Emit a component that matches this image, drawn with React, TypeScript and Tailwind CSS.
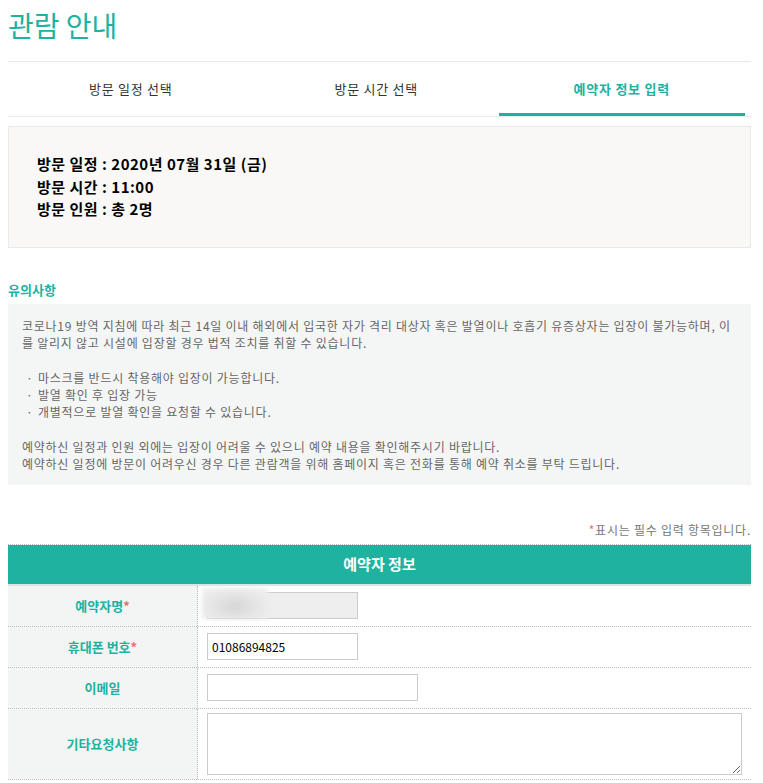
import React from "react";

const font = { fontFamily: '"Noto Sans CJK KR", "Noto Sans", sans-serif' };

const tabs = ["방문 일정 선택", "방문 시간 선택", "예약자 정보 입력"];

function Row({ label, required, tall, children }: { label: string; required?: boolean; tall?: boolean; children: React.ReactNode }) {
  return (
    <div className={`flex border-b border-dotted border-[#bbbbbb] ${tall ? "h-[71px]" : "h-[41px]"}`}>
      <div className="flex w-[190px] shrink-0 items-center justify-center border-r border-dotted border-[#bbbbbb] bg-[#f3f5f4] text-[13px] font-bold text-[#20b2a0]">
        {label}
        {required && <span className="text-[#f26a6a]">*</span>}
      </div>
      <div className="relative flex flex-1 items-center pl-[9px]">{children}</div>
    </div>
  );
}

export default function App() {
  return (
    <div className="min-h-screen bg-white" style={font}>
      <div className="ml-2 w-[743px]">
        <h1 className="pt-[5px] text-[28px] leading-[40px] font-normal text-[#20b2a0]">관람 안내</h1>
        <div className="mt-[16px] grid grid-cols-[repeat(3,245.5px)] border-y border-[#e6eaea]">
          {tabs.map((t, i) => (
            <div key={t} className="relative flex h-[54px] items-center justify-center text-[13px] tracking-[0.75px]">
              <span className={i === 2 ? "font-bold text-[#20b2a0]" : "text-[#333333]"}>{t}</span>
              {i === 2 && <div className="absolute bottom-0 left-0 h-[3px] w-full bg-[#20b2a0]" />}
            </div>
          ))}
        </div>

        <div className="mt-[9px] border border-[#e8eaea] bg-[#f9f8f6] pt-[26px] pb-[26px] pl-[28px] text-[15px] leading-[22.5px] font-bold tracking-[0.5px] text-black">
          <p>방문 일정 : 2020년 07월 31일 (금)</p>
          <p>방문 시간 : 11:00</p>
          <p>방문 인원 : 총 2명</p>
        </div>

        <h2 className="mt-[33px] text-[13px] leading-[18px] font-bold text-[#20b2a0]">유의사항</h2>
        <div className="mt-[5px] bg-[#f4f6f5] px-[14px] pt-[13px] pb-[13px] text-[12px] leading-[17px] tracking-[0.75px] text-[#666666]">
          <p>코로나19 방역 지침에 따라 최근 14일 이내 해외에서 입국한 자가 격리 대상자 혹은 발열이나 호흡기 유증상자는 입장이 불가능하며, 이를 알리지 않고 시설에 입장할 경우 법적 조치를 취할 수 있습니다.</p>
          <ul className="mt-[18px]">
            {["마스크를 반드시 착용해야 입장이 가능합니다.", "발열 확인 후 입장 가능", "개별적으로 발열 확인을 요청할 수 있습니다."].map((b) => (
              <li key={b} className="flex">
                <span className="w-[16px] pl-[4px]">·</span>
                {b}
              </li>
            ))}
          </ul>
          <p className="mt-[18px]">예약하신 일정과 인원 외에는 입장이 어려울 수 있으니 예약 내용을 확인해주시기 바랍니다.</p>
          <p>예약하신 일정에 방문이 어려우신 경우 다른 관람객을 위해 홈페이지 혹은 전화를 통해 예약 취소를 부탁 드립니다.</p>
        </div>

        <p className="mt-[36px] text-right text-[12px] leading-[17px] tracking-[0.75px] text-[#777777]">
          <span className="text-[#f26a6a]">*</span>표시는 필수 입력 항목입니다.
        </p>

        <div className="mt-[6px] border-t border-dotted border-[#bbbbbb]">
          <div className="flex h-[41px] items-center justify-center border-b-2 border-[#dde3e3] bg-[#20b2a0] text-[15px] font-bold text-white">
            예약자 정보
          </div>
          <Row label="예약자명" required>
            <div className="h-[27px] w-[151px] border border-[#cccccc] bg-[#eeeeee]" />
            <div className="absolute top-[2px] left-[4px] h-[31px] w-[66px] bg-[radial-gradient(ellipse_at_50%_60%,#d6d6d6_0%,#e6e6e6_50%,#f1f1f1_100%)] blur-[2px]" />
          </Row>
          <Row label="휴대폰 번호" required>
            <input
              readOnly
              value="01086894825"
              className="h-[27px] w-[151px] border border-[#cccccc] bg-white px-[4px] text-[12px] text-black outline-none"
              style={font}
            />
          </Row>
          <Row label="이메일">
            <input readOnly className="h-[27px] w-[211px] border border-[#cccccc] bg-white outline-none" />
          </Row>
          <Row label="기타요청사항" tall>
            <textarea readOnly className="h-[62px] w-[535px] resize border border-[#cccccc] bg-white outline-none" />
          </Row>
        </div>
      </div>
    </div>
  );
}
